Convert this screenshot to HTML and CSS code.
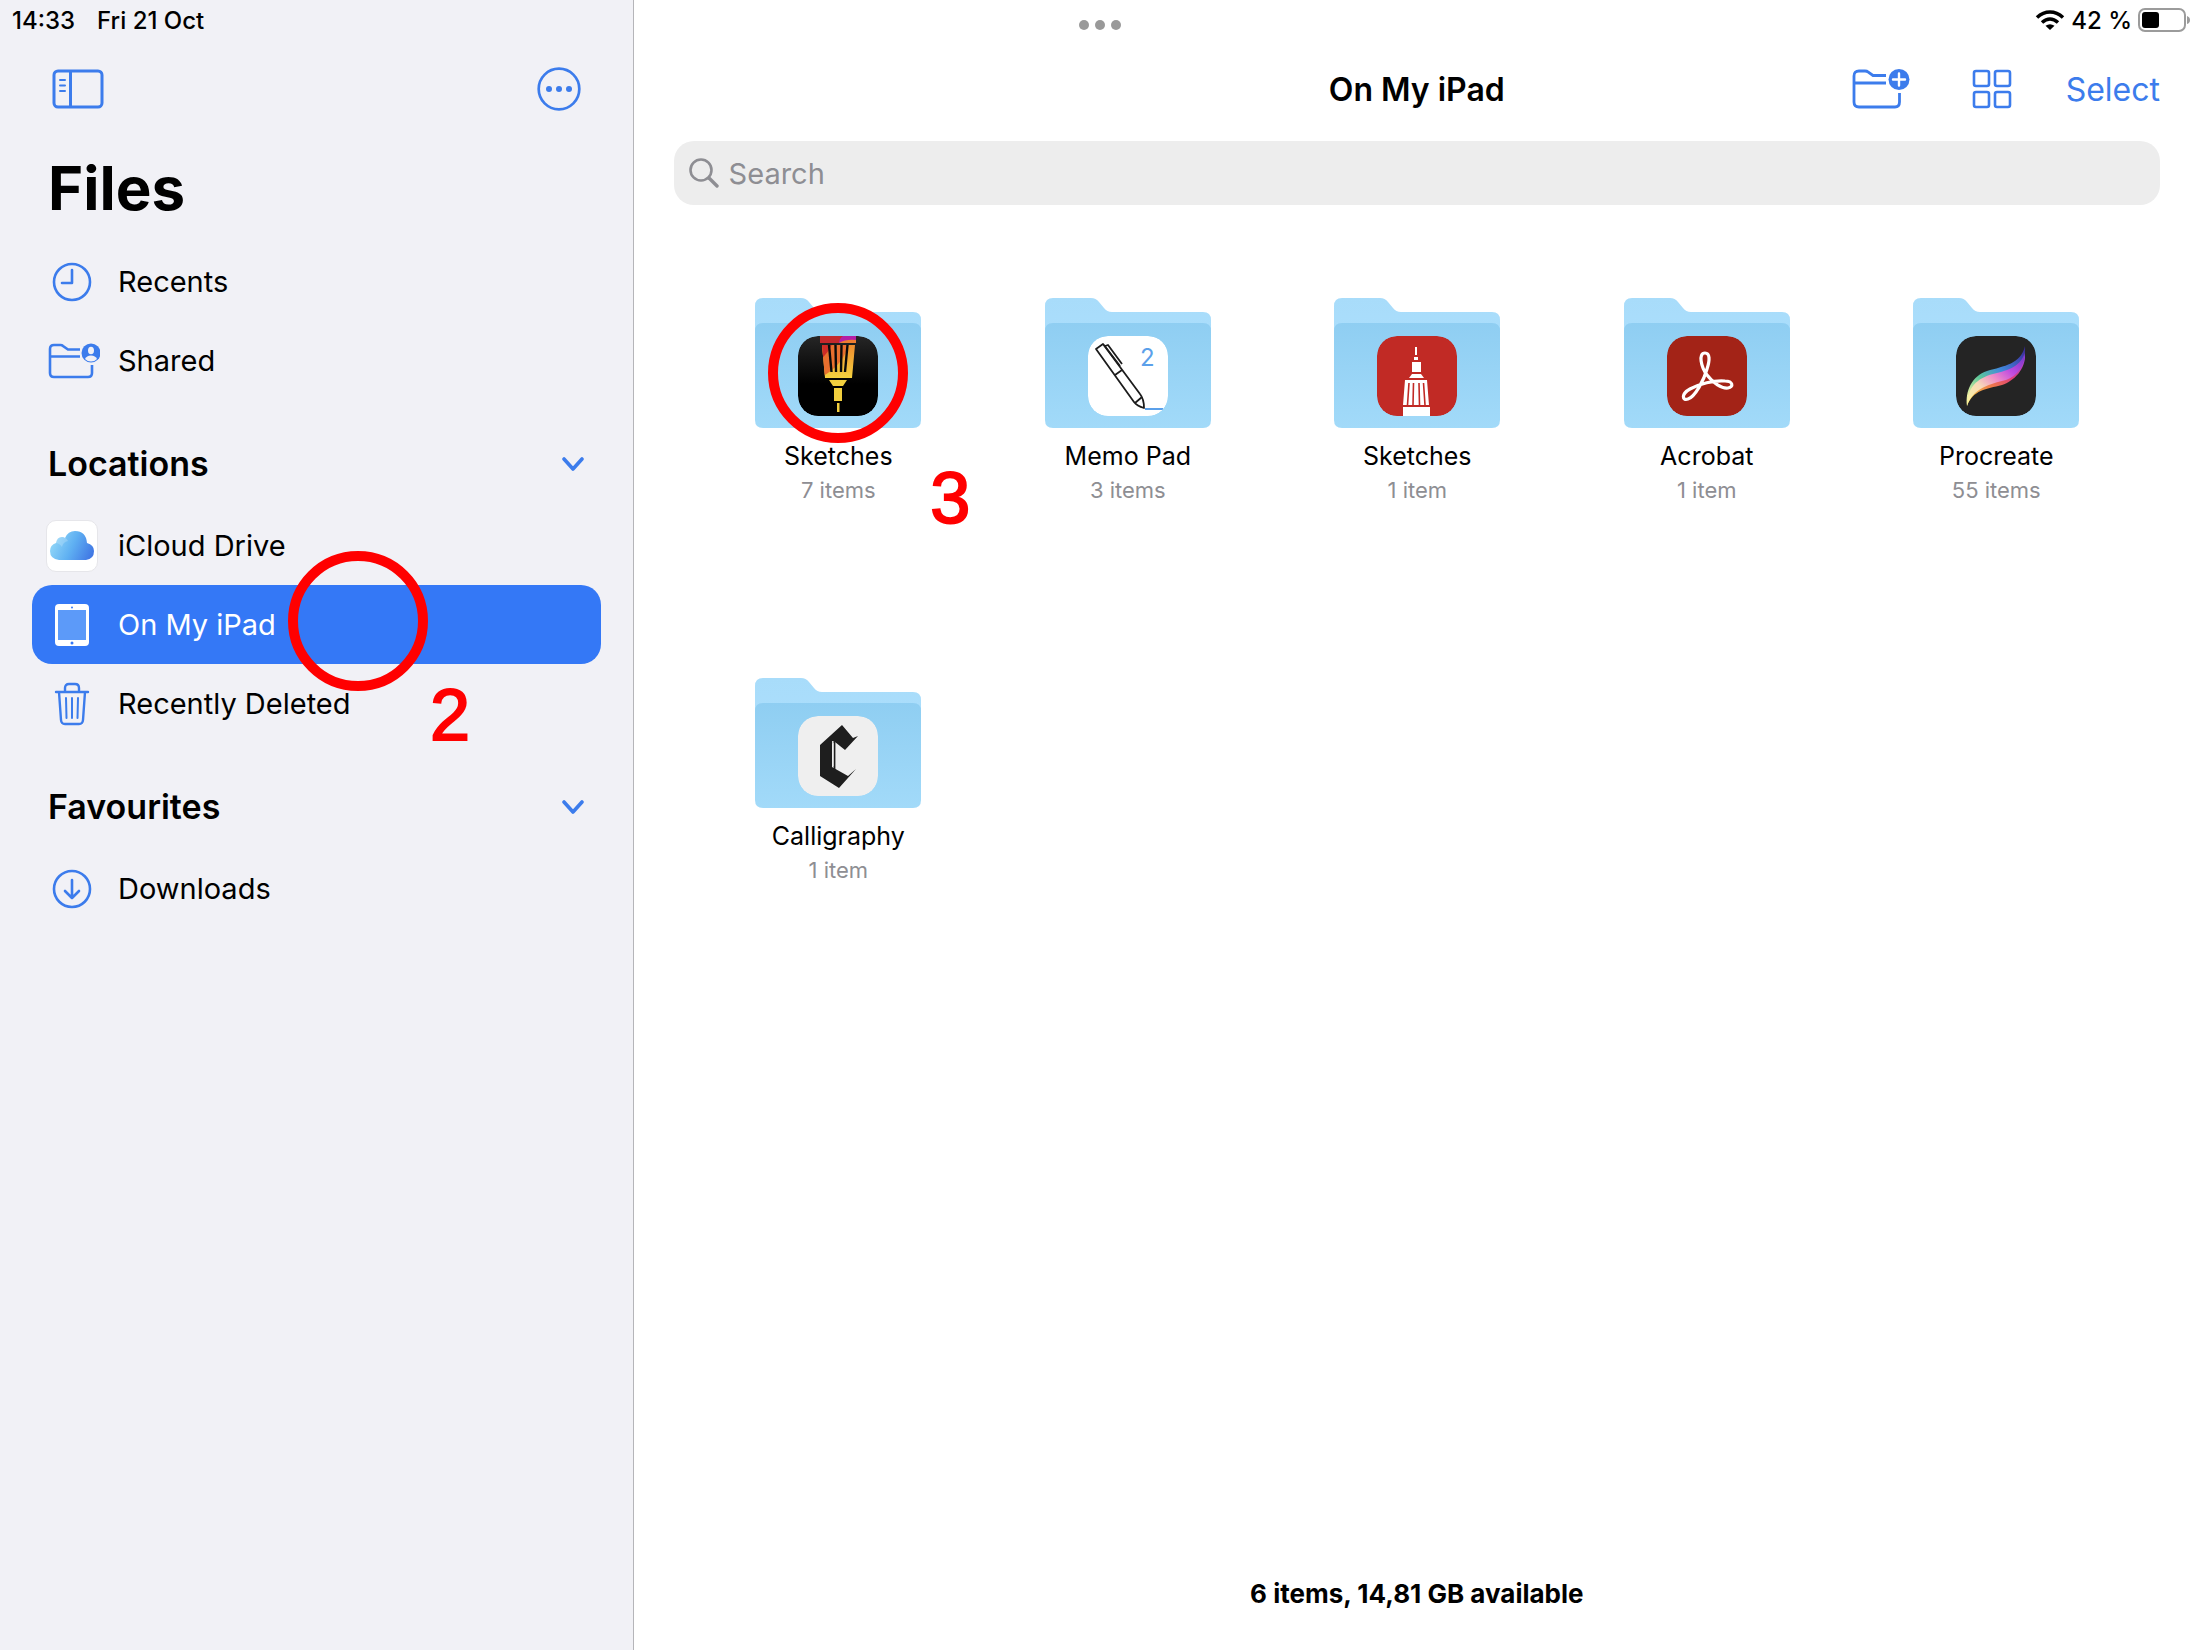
FILE: index.html
```
<!DOCTYPE html>
<html lang="en">
<head>
  <meta charset="UTF-8" />
  <meta name="viewport" content="width=device-width, initial-scale=1" />
  <title>Files - On My iPad</title>
  <link rel="stylesheet" href="styles.css">
</head>
<body>
  <!-- shared shapes -->
  <svg class="defs" width="0" height="0" aria-hidden="true">
    <defs>
      <linearGradient id="folderBack" x1="0" y1="0" x2="0" y2="1">
        <stop offset="0" stop-color="#a8dcfa" />
        <stop offset="1" stop-color="#acdffd" />
      </linearGradient>
      <linearGradient id="folderFront" x1="0" y1="0" x2="0" y2="1">
        <stop offset="0" stop-color="#8fcef2" />
        <stop offset="1" stop-color="#a2daf9" />
      </linearGradient>
      <symbol id="folder" viewBox="0 0 166 130">
        <path fill="url(#folderBack)" d="M0 8Q0 0 8 0H46Q51 0 54 4L59 10Q62 14 67 14H158Q166 14 166 22V60H0Z" />
        <path fill="url(#folderFront)" d="M0 33Q0 25 8 25H158Q166 25 166 33V122Q166 130 158 130H8Q0 130 0 122Z" />
      </symbol>
      <symbol id="chevron" viewBox="0 0 24 16">
        <path d="M3 4L12 14L21 4" fill="none" stroke="currentColor" stroke-width="3.600" stroke-linecap="round" stroke-linejoin="round" />
      </symbol>
    </defs>
  </svg>

  <div class="app">
    <aside class="sidebar">
      <div class="status">
        <span>14:33</span>
        <span>Fri 21 Oct</span>
      </div>

      <div class="sidebar-tools">
        <button type="button" aria-label="Toggle sidebar">
          <svg width="52" height="40" viewBox="0 0 52 40" fill="none" stroke="currentColor" stroke-width="3">
            <rect x="2" y="2" width="48" height="36" rx="4" />
            <path d="M18.500 2V38" />
            <path d="M8 11H13M8 16.500H13M8 22H13" stroke-width="2" stroke-linecap="round" />
          </svg>
        </button>
        <button type="button" aria-label="More">
          <svg width="44" height="44" viewBox="0 0 44 44">
            <circle cx="22" cy="22" r="20.300" fill="none" stroke="currentColor" stroke-width="2.700" />
            <g fill="currentColor">
              <circle cx="12" cy="22" r="3" /><circle cx="22" cy="22" r="3" /><circle cx="32" cy="22" r="3" />
            </g>
          </svg>
        </button>
      </div>

      <h1>Files</h1>

      <nav aria-label="Files">
        <ul class="places">
          <li><a href="#recents">
            <span class="icon">
              <svg width="40" height="40" viewBox="0 0 40 40" fill="none" stroke="currentColor" stroke-width="2.600" stroke-linecap="round" stroke-linejoin="round">
                <circle cx="20" cy="20" r="18" />
                <path d="M20 8V21H10" />
              </svg>
            </span>
            Recents
          </a></li>
          <li><a href="#shared">
            <span class="icon">
              <svg width="55" height="36" viewBox="-3 0 55 36" fill="none" stroke="currentColor" stroke-width="2.600">
                <path d="M32 6.500H20L15 3Q14 2 12.500 2H6Q2 2 2 6V30Q2 34 6 34H40Q44 34 44 30V22M2 13.500H32" />
                <circle cx="43" cy="10" r="9.500" fill="currentColor" stroke="none" />
                <ellipse cx="43" cy="7.500" rx="3" ry="3.800" fill="#f1f1f6" stroke="none" />
                <path d="M37 16Q38.500 12.500 43 12.500T49 16Q46.500 18.500 43 18.500T37 16Z" fill="#f1f1f6" stroke="none" />
              </svg>
            </span>
            Shared
          </a></li>
        </ul>

        <div class="group">
          <h2>Locations</h2>
          <button type="button" aria-label="Collapse Locations"><svg width="24" height="16"><use href="#chevron" /></svg></button>
        </div>
        <ul class="places">
          <li><a href="#icloud">
            <span class="icon">
              <span class="tile">
                <svg width="44" height="30" viewBox="0 0 44 30">
                  <defs>
                    <linearGradient id="cloud" x1="0" y1="0.400" x2="1" y2="0.700">
                      <stop offset="0" stop-color="#93d8f8" />
                      <stop offset="0.500" stop-color="#5fb0f2" />
                      <stop offset="1" stop-color="#4077e4" />
                    </linearGradient>
                  </defs>
                  <path fill="url(#cloud)" d="M9 29Q0 28 0 20Q0 14 6 12Q7 6 12 6Q14 6 15 7Q18 0 25 0Q36 0 37 12Q44 14 44 20Q44 28 36 29Z" />
                  <path fill="#fff" opacity="0.200" d="M6 12Q7 6 12 6Q16 6 18 10Q13 11 12 16Q9 12 6 12Z" />
                </svg>
              </span>
            </span>
            iCloud Drive
          </a></li>
          <li class="current">
            <a href="#ipad" aria-current="page">
              <span class="icon">
                <svg width="34" height="42" viewBox="0 0 34 42">
                  <rect width="34" height="42" rx="4" fill="#fff" />
                  <rect x="3" y="6" width="28" height="30" fill="#5c9af9" />
                  <circle cx="17" cy="3.500" r="1" fill="#3478f6" />
                  <circle cx="17" cy="39" r="1.500" fill="#3478f6" />
                </svg>
              </span>
              On My iPad
            </a>
            <span class="ring ring-place"></span>
            <span class="step step-place">2</span>
          </li>
          <li><a href="#deleted">
            <span class="icon">
              <svg width="36" height="44" viewBox="0 0 36 44" fill="none" stroke="currentColor" stroke-width="2.400" stroke-linecap="round" stroke-linejoin="round">
                <path d="M2 10H34M11 10V6Q11 2 15 2H21Q25 2 25 6V10M5 10L7 38Q7.300 42 11 42H25Q28.700 42 29 38L31 10" />
                <path d="M12 16L12.500 36M18 16V36M24 16L23.500 36" stroke-width="2" />
              </svg>
            </span>
            Recently Deleted
          </a></li>
        </ul>

        <div class="group">
          <h2>Favourites</h2>
          <button type="button" aria-label="Collapse Favourites"><svg width="24" height="16"><use href="#chevron" /></svg></button>
        </div>
        <ul class="places">
          <li><a href="#downloads">
            <span class="icon">
              <svg width="40" height="40" viewBox="0 0 40 40" fill="none" stroke="currentColor" stroke-width="2.600" stroke-linecap="round" stroke-linejoin="round">
                <circle cx="20" cy="20" r="18" />
                <path d="M20 11V29M13 22L20 29L27 22" />
              </svg>
            </span>
            Downloads
          </a></li>
        </ul>
      </nav>
    </aside>

    <main class="content">
      <div class="status status-right">
        <svg width="30" height="20" viewBox="0 0 30 20" fill="none" stroke="#000" stroke-width="3.600">
          <path d="M2 7.500Q8 2 15 2T28 7.500" />
          <path d="M7 12.500Q11 9 15 9T23 12.500" />
          <path d="M15 20L10.500 15.800Q15 12.600 19.500 15.800Z" fill="#000" stroke="none" />
        </svg>
        <span>42 %</span>
        <svg width="54" height="24" viewBox="0 0 54 24">
          <rect x="1" y="1" width="46" height="22" rx="6" fill="none" stroke="#9b9b9b" stroke-width="2" />
          <rect x="4" y="4" width="17" height="16" rx="3" />
          <path d="M49 8Q52 9 52 12T49 16Z" fill="#9b9b9b" />
        </svg>
      </div>

      <header class="toolbar">
        <h2>On My iPad</h2>
        <div class="actions">
          <button type="button" aria-label="New folder">
            <svg width="58" height="42" viewBox="0 0 58 42" fill="none" stroke="currentColor" stroke-width="2.800">
              <path d="M34 7.500H21L16 4Q15 3 13 3H7Q2 3 2 8V34Q2 39 7 39H43Q47.500 39 47.500 34V25M2 15H34" />
              <circle cx="47" cy="11.500" r="10.500" fill="currentColor" stroke="none" />
              <path d="M47 5.500V17.500M41 11.500H53" stroke="#fff" stroke-width="2.400" stroke-linecap="round" />
            </svg>
          </button>
          <button type="button" aria-label="View as icons">
            <svg width="40" height="40" viewBox="0 0 40 40" fill="none" stroke="currentColor" stroke-width="2.600">
              <rect x="2" y="2" width="15" height="15" rx="2" /><rect x="23" y="2" width="15" height="15" rx="2" />
              <rect x="2" y="23" width="15" height="15" rx="2" /><rect x="23" y="23" width="15" height="15" rx="2" />
            </svg>
          </button>
          <button type="button">Select</button>
        </div>
      </header>

      <label class="search">
        <svg width="30" height="30" viewBox="0 0 30 30" fill="none" stroke="currentColor" stroke-width="2.600" stroke-linecap="round">
          <circle cx="12" cy="12" r="10.500" />
          <path d="M20 20L28 28" stroke-width="3.400" />
        </svg>
        <input type="search" placeholder="Search" aria-label="Search" />
      </label>

      <ul class="folders">
        <li><a href="#sketches">
          <span class="art">
            <svg width="166" height="130"><use href="#folder" /></svg>
            <svg class="app-icon" width="80" height="80" viewBox="0 0 80 80">
              <defs>
                <linearGradient id="ink" x1="0" y1="0" x2="0" y2="1">
                  <stop offset="0" stop-color="#262626" /><stop offset="0.600" stop-color="#000" />
                </linearGradient>
                <linearGradient id="amber" x1="0" y1="0" x2="0" y2="1">
                  <stop offset="0" stop-color="#ee8a2e" /><stop offset="1" stop-color="#f5d440" />
                </linearGradient>
                <clipPath id="brush"><path d="M24 9H57L54 42H27Z" /></clipPath>
              </defs>
              <rect width="80" height="80" rx="20" fill="url(#ink)" />
              <path fill="#c5282c" d="M22 0H58V7H22Z" />
              <path fill="#b41fa6" d="M45 0H58V4L41 7Q41 3 45 0Z" />
              <path fill="#ee7d31" d="M41 7Q48 3 58 4V7Z" />
              <g clip-path="url(#brush)">
                <rect x="22" y="8" width="36" height="35" fill="url(#amber)" />
                <path fill="#e96f2e" d="M22 8H50Q47 28 22 42Z" />
                <path fill="#cf2b27" d="M22 8H34Q31 16 22 24Z" />
              </g>
              <path stroke="#0a0a0a" stroke-width="2.400" d="M31 9L33.500 36M37.500 9L38 36M43.500 9L43 36M49.500 9L47 36" />
              <path fill="#f2cf3e" d="M31 44H49L45 50H35ZM36 52H44V65H36ZM39 67H41.500V76H39Z" />
            </svg>
            <span class="ring ring-folder"></span>
          </span>
          <span class="name">Sketches</span>
          <span class="count">7 items</span>
          <span class="step step-folder">3</span>
        </a></li>

        <li><a href="#memo">
          <span class="art">
            <svg width="166" height="130"><use href="#folder" /></svg>
            <svg class="app-icon" width="80" height="80" viewBox="0 0 80 80">
              <rect width="80" height="80" rx="20" fill="#fff" />
              <g fill="none" stroke="#1c1c1c" stroke-width="1.800" stroke-linejoin="round">
                <path d="M8 13L15 8L52 58Q56 63 56 72Q49 70 46 66Z" />
                <path d="M27 39L34 34M47 67L54 61M17 10L20 9L34 28M16 9L32 30" />
              </g>
              <text class="memo-digit" x="52" y="30">2</text>
              <path d="M57 73H75" stroke="#5ba0ea" stroke-width="2" />
            </svg>
          </span>
          <span class="name">Memo Pad</span>
          <span class="count">3 items</span>
        </a></li>

        <li><a href="#sketches-school">
          <span class="art">
            <svg width="166" height="130"><use href="#folder" /></svg>
            <svg class="app-icon" width="80" height="80" viewBox="0 0 80 80">
              <rect width="80" height="80" rx="20" fill="#c12a25" />
              <path fill="#fff" d="M38 11H40V19H38ZM37 21H41V24H37ZM35 26H44V36H35ZM35 38H44L47 42H32ZM28 44H50L52 69H26ZM26 71H53V80H26Z" />
              <path stroke="#c12a25" stroke-width="1.600" d="M32 47L30.500 69M36.500 47L36 69M42 47L42.500 69M46.500 47L48 69" />
            </svg>
          </span>
          <span class="name">Sketches</span>
          <span class="count">1 item</span>
        </a></li>

        <li><a href="#acrobat">
          <span class="art">
            <svg width="166" height="130"><use href="#folder" /></svg>
            <svg class="app-icon" width="80" height="80" viewBox="0 0 80 80">
              <rect width="80" height="80" rx="20" fill="#a32317" />
              <path fill="none" stroke="#fff" stroke-width="3.200" stroke-linejoin="round" d="M38 17C31 17 34 31 40 39C46 47 55 53 61 52C67 51 66 45 58 45C47 44 32 48 23 53C14 58 15 65 21 63C28 61 37 44 40 33C43 24 43 17 38 17Z" />
            </svg>
          </span>
          <span class="name">Acrobat</span>
          <span class="count">1 item</span>
        </a></li>

        <li><a href="#procreate">
          <span class="art">
            <svg width="166" height="130"><use href="#folder" /></svg>
            <svg class="app-icon" width="80" height="80" viewBox="0 0 80 80">
              <defs>
                <linearGradient id="stroke" x1="0" y1="1" x2="1" y2="0">
                  <stop offset="0.050" stop-color="#faf3a0" />
                  <stop offset="0.300" stop-color="#f8d9b8" />
                  <stop offset="0.500" stop-color="#ee8cc8" />
                  <stop offset="0.700" stop-color="#c04be0" />
                  <stop offset="1" stop-color="#6a35c8" />
                </linearGradient>
                <linearGradient id="strokeTop" x1="0" y1="1" x2="1" y2="0">
                  <stop offset="0.100" stop-color="#e8f0a0" />
                  <stop offset="0.350" stop-color="#5cc79a" />
                  <stop offset="0.600" stop-color="#4187dc" />
                  <stop offset="1" stop-color="#3a2394" />
                </linearGradient>
                <linearGradient id="strokeLow" x1="0" y1="1" x2="1" y2="0">
                  <stop offset="0.100" stop-color="#efc548" />
                  <stop offset="0.400" stop-color="#ef7b4a" />
                  <stop offset="0.650" stop-color="#df3f77" />
                  <stop offset="1" stop-color="#9a45e8" />
                </linearGradient>
              </defs>
              <rect width="80" height="80" rx="20" fill="#242424" />
              <path fill="url(#strokeTop)" d="M11 70C9 55 16 40 31 35C48 30 65 28 69 10C70 26 62 38 50 41C32 45 15 52 11 70Z" />
              <path fill="url(#strokeLow)" d="M11 70C13 50 24 42 40 38C56 34 65 30 69 18C70 33 58 45 46 49C30 53 17 54 11 70Z" />
              <path fill="url(#stroke)" d="M11 70C11 52 21 42 37 38C54 34 65 30 69 16C69 30 61 40 50 44C34 48 17 52 11 70Z" />
            </svg>
          </span>
          <span class="name">Procreate</span>
          <span class="count">55 items</span>
        </a></li>

        <li><a href="#calligraphy">
          <span class="art">
            <svg width="166" height="130"><use href="#folder" /></svg>
            <svg class="app-icon" width="80" height="80" viewBox="0 0 80 80">
              <rect width="80" height="80" rx="20" fill="#efefef" />
              <path fill="#1e1e1e" d="M22 29L44 9L55 22L60 20L47 34L37 26L34 28V51L50 60L58 53L41 72L22 60Z" />
              <path d="M36.500 24V54" stroke="#1e1e1e" stroke-width="1.800" />
              <path d="M34.800 25V50" stroke="#efefef" stroke-width="1.400" />
            </svg>
          </span>
          <span class="name">Calligraphy</span>
          <span class="count">1 item</span>
        </a></li>
      </ul>

      <footer class="summary">6 items, 14,81 GB available</footer>
    </main>

    <div class="multitask" aria-hidden="true"><i></i><i></i><i></i></div>
  </div>
</body>
</html>
```

FILE: styles.css
```
:root {
  --blue: #3478f6;
  --icon-blue: #3c7cec;
  --gray: #8e8e93;
  --field: #ededed;
  --sidebar-bg: #f1f1f6;
  --line: #b5b5b9;
  --marker: #ff0000;
}

* {
  box-sizing: border-box;
}

body {
  margin: 0;
  font-family: Inter, "Liberation Sans", sans-serif;
  font-size: 29px;
  color: #000;
  background: #fff;
}

h1, h2, ul {
  margin: 0;
  padding: 0;
}

ul {
  list-style: none;
}

a {
  color: inherit;
  text-decoration: none;
}

button {
  display: flex;
  align-items: center;
  padding: 0;
  border: none;
  background: none;
  font: inherit;
  color: var(--icon-blue);
  cursor: pointer;
}

svg {
  display: block;
  flex-shrink: 0;
}

.defs {
  position: absolute;
}

.app {
  position: relative;
  display: grid;
  grid-template-columns: minmax(480px, 28.8%) 1fr;
  min-height: 100vh;
}

.status {
  display: flex;
  align-items: center;
  gap: 22px;
  height: 40px;
  font-size: 24px;
  font-weight: 500;
}

.status-right {
  justify-content: flex-end;
  gap: 6px;
  padding-right: 8px;
}

/* sidebar */

.sidebar {
  background: var(--sidebar-bg);
  border-right: 1px solid var(--line);
}

.sidebar .status {
  padding-left: 12px;
}

.sidebar-tools {
  display: flex;
  justify-content: space-between;
  align-items: center;
  height: 98px;
  padding: 0 52px;
}

h1 {
  margin: 12px 0 16px;
  padding-left: 48px;
  font-size: 60px;
  line-height: 76px;
  font-weight: 700;
}

nav {
  padding: 0 32px;
}

.places li {
  position: relative;
}

.places a {
  display: flex;
  align-items: center;
  gap: 20px;
  height: 79px;
  padding: 0 14px;
  border-radius: 20px;
}

.icon {
  display: flex;
  justify-content: center;
  width: 52px;
  color: var(--icon-blue);
}

.tile {
  display: flex;
  justify-content: center;
  align-items: center;
  width: 52px;
  height: 52px;
  border: 1px solid #e6e6ea;
  border-radius: 10px;
  background: #fff;
}

.current a {
  background: var(--blue);
  color: #fff;
}

.group {
  display: flex;
  justify-content: space-between;
  align-items: center;
  height: 86px;
  margin-top: 20px;
  padding: 0 16px;
}

h2 {
  font-size: 34px;
  font-weight: 600;
}

/* main pane */

.content {
  display: flex;
  flex-direction: column;
}

.toolbar {
  display: grid;
  grid-template-columns: 1fr auto 1fr;
  align-items: center;
  height: 98px;
  padding: 0 40px;
}

.toolbar h2 {
  grid-column: 2;
  font-size: 32px;
}

.actions {
  display: flex;
  justify-content: flex-end;
  align-items: center;
  gap: 54px;
  font-size: 32px;
}

.actions button:nth-child(2) {
  margin-left: 8px;
}

.search {
  display: flex;
  align-items: center;
  gap: 10px;
  height: 64px;
  margin: 3px 40px 0;
  padding: 0 15px;
  border-radius: 20px;
  background: var(--field);
  color: var(--gray);
}

.search input {
  flex: 1;
  padding: 0;
  border: none;
  outline: none;
  background: none;
  font: inherit;
  color: #000;
}

.search input::placeholder {
  color: var(--gray);
}

.folders {
  display: grid;
  grid-template-columns: repeat(5, 1fr);
  row-gap: 172px;
  padding: 93px 59px 60px 60px;
}

.folders li {
  display: flex;
  justify-content: center;
}

.folders a {
  position: relative;
  display: flex;
  flex-direction: column;
  align-items: center;
}

.art {
  position: relative;
}

/* app badge sits over the folder */
.app-icon {
  position: absolute;
  top: 38px;
  left: 43px;
  border-radius: 20px;
}

.memo-digit {
  font-family: Inter, sans-serif;
  font-size: 24px;
  fill: #5ba0ea;
}

.name {
  margin-top: 12px;
  font-size: 25px;
  line-height: 32px;
}

.count {
  margin-top: 2px;
  font-size: 22px;
  line-height: 32px;
  color: var(--gray);
}

.summary {
  margin-top: auto;
  padding-bottom: 40px;
  font-size: 26px;
  line-height: 32px;
  font-weight: 700;
  text-align: center;
}

.multitask {
  position: absolute;
  top: 20px;
  left: 50%;
  display: flex;
  gap: 6px;
  transform: translateX(-50%);
}

.multitask i {
  width: 10px;
  height: 10px;
  border-radius: 50%;
  background: #999;
}

/* tutorial markers */

.ring {
  position: absolute;
  z-index: 1;
  width: 140px;
  height: 140px;
  border: 10px solid var(--marker);
  border-radius: 50%;
  pointer-events: none;
}

.ring-place {
  top: -34px;
  left: 256px;
}

.ring-folder {
  top: 5px;
  left: 13px;
}

.step {
  position: absolute;
  z-index: 1;
  font-family: "Liberation Sans", sans-serif;
  font-size: 72px;
  line-height: 80px;
  color: var(--marker);
  -webkit-text-stroke: 2px var(--marker);
}

.step-place {
  top: 90px;
  left: 398px;
}

.step-folder {
  top: 160px;
  left: 175px;
}
```
